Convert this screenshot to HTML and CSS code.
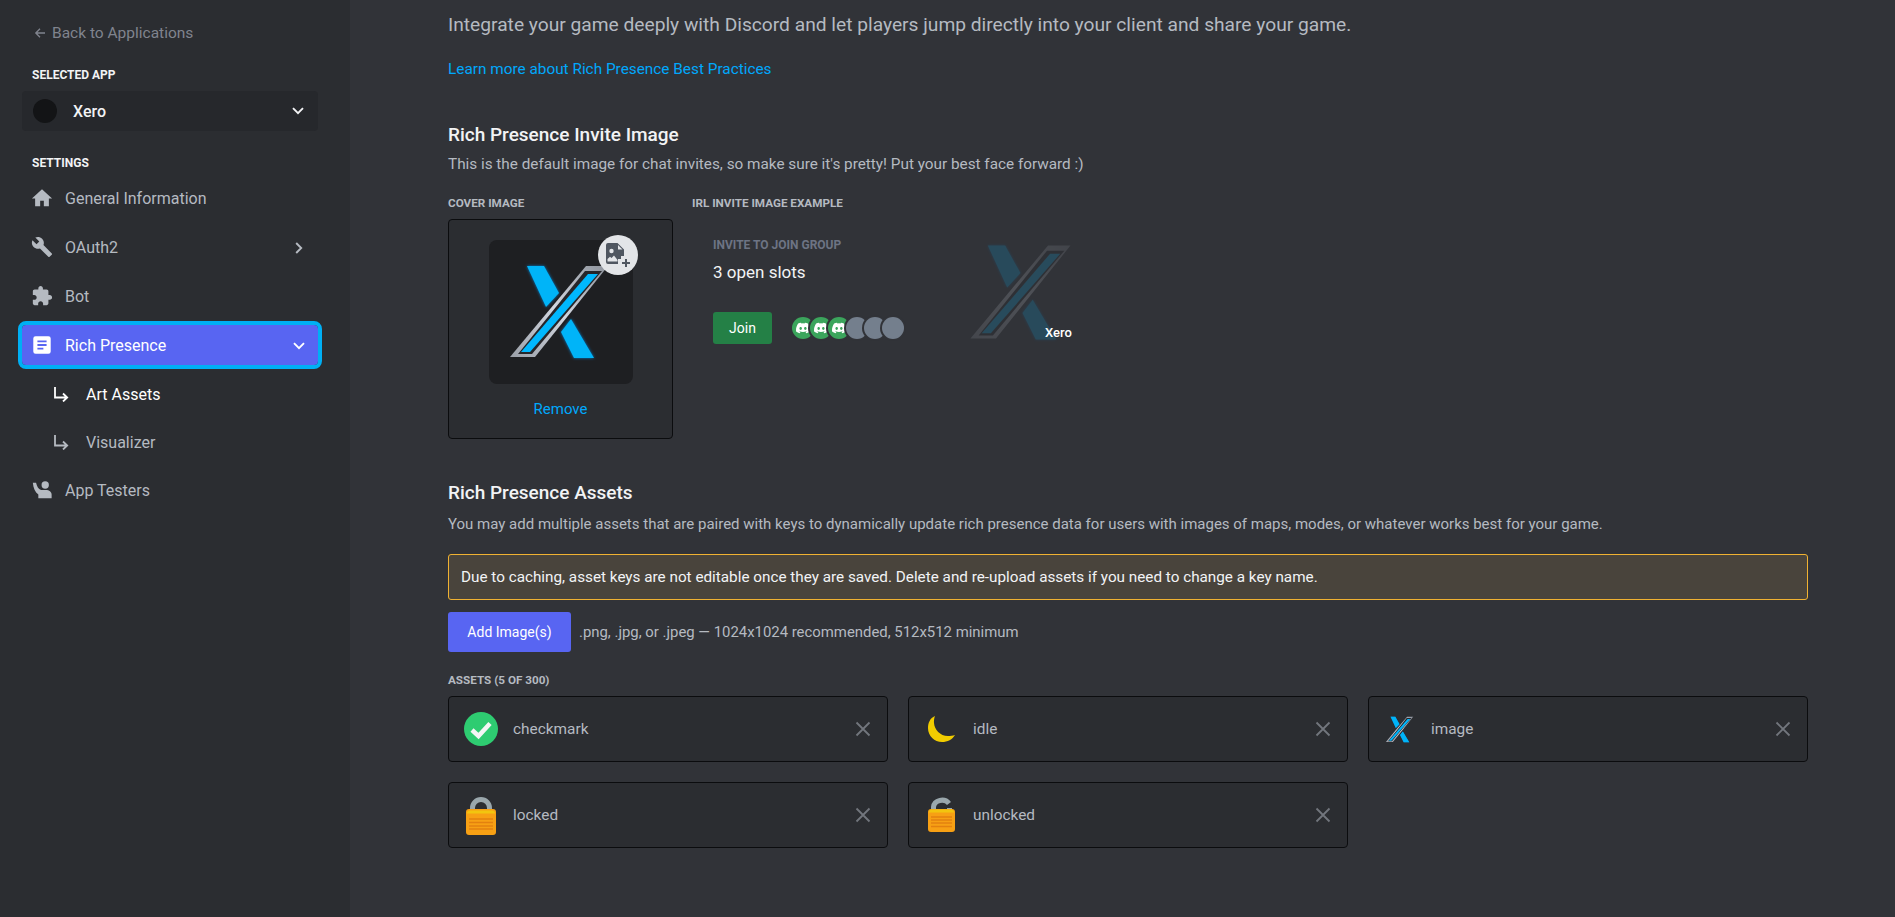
FILE: index.html
```html
<!DOCTYPE html>
<html lang="en">

<head>
    <meta charset="UTF-8">
    <meta name="viewport" content="width=device-width, initial-scale=1.0">
    <title>Rich Presence Art Assets</title>
    <link rel="stylesheet" href="styles.css">
</head>

<body>
    <svg class="defs" width="0" height="0" aria-hidden="true">
        <defs>
            <linearGradient id="steel" x1="0" y1="1" x2="1" y2="0">
                <stop offset="0" stop-color="#9a9fa8" />
                <stop offset="0.5" stop-color="#d2d7e0" />
                <stop offset="1" stop-color="#8d929b" />
            </linearGradient>
            <filter id="glow" x="-30%" y="-30%" width="160%" height="160%">
                <feGaussianBlur stdDeviation="1.8" />
            </filter>
            <filter id="soft" x="-5%" y="-5%" width="110%" height="110%">
                <feGaussianBlur stdDeviation="0.5" />
            </filter>
            <symbol id="xlogo" viewBox="0 0 144 144">
                <g fill="#0a7fd0" filter="url(#glow)">
                    <polygon points="38,26 55,26 70,53 57,67" />
                    <polygon points="82,79 105,118 85,118 72,92" />
                </g>
                <polygon fill="#00b4f8" points="38,26 55,26 70,53 57,67" />
                <polygon fill="#00b4f8" points="82,79 105,118 85,118 72,92" />
                <g filter="url(#soft)">
                    <polygon fill="url(#steel)" points="97,26 119,26 46,117 21,117" />
                    <polygon fill="#25262b" points="96,31 113,31 43,114 29,114" />
                    <polygon fill="#00b8ff" points="99,34 109,34 41,112 32,112" />
                </g>
            </symbol>
            <symbol id="subarrow" viewBox="0 0 16 16">
                <path d="M2 1v10.500h12M10 7.500l4.200 4-4.200 4" fill="none" stroke="currentColor" stroke-width="1.800" />
            </symbol>
            <symbol id="closex" viewBox="0 0 16 16">
                <path d="M1.500 1.500l13 13M14.500 1.500l-13 13" fill="none" stroke="currentColor" stroke-width="1.800" />
            </symbol>
            <symbol id="clyde" viewBox="0 0 24 24">
                <path fill="currentColor" d="M20.317 4.37a19.79 19.79 0 0 0-4.885-1.515.074.074 0 0 0-.079.037c-.211.375-.445.865-.608 1.25a18.27 18.27 0 0 0-5.487 0 12.64 12.64 0 0 0-.618-1.25.077.077 0 0 0-.079-.037A19.74 19.74 0 0 0 3.677 4.37a.07.07 0 0 0-.032.028C.533 9.046-.319 13.58.099 18.058a.082.082 0 0 0 .031.056 19.9 19.9 0 0 0 5.993 3.03.078.078 0 0 0 .084-.028c.462-.63.873-1.295 1.226-1.994a.076.076 0 0 0-.042-.106 13.1 13.1 0 0 1-1.872-.892.077.077 0 0 1-.008-.128c.126-.094.252-.192.372-.291a.074.074 0 0 1 .078-.011c3.928 1.794 8.18 1.794 12.061 0a.074.074 0 0 1 .079.01c.12.099.246.198.373.292a.077.077 0 0 1-.007.128c-.598.35-1.22.645-1.873.891a.077.077 0 0 0-.041.107c.36.698.772 1.363 1.225 1.993a.076.076 0 0 0 .084.029 19.84 19.84 0 0 0 6.002-3.03.077.077 0 0 0 .032-.055c.5-5.177-.838-9.674-3.549-13.66a.061.061 0 0 0-.031-.029zM8.02 15.33c-1.183 0-2.157-1.085-2.157-2.419 0-1.333.956-2.419 2.157-2.419 1.21 0 2.176 1.096 2.157 2.42 0 1.333-.956 2.418-2.157 2.418zm7.975 0c-1.183 0-2.157-1.085-2.157-2.419 0-1.333.955-2.419 2.157-2.419 1.21 0 2.176 1.096 2.157 2.42 0 1.333-.946 2.418-2.157 2.418z" />
            </symbol>
        </defs>
    </svg>

    <aside class="sidebar">
        <a class="back-link" href="#">
            <svg class="back-arrow" viewBox="0 0 12 12">
                <path d="M11 6H2M6 1.800L1.800 6 6 10.200" fill="none" stroke="currentColor" stroke-width="1.300" />
            </svg>
            Back to Applications
        </a>

        <div class="side-label selected-label">SELECTED APP</div>
        <div class="app-select">
            <span class="app-avatar"></span>
            <span class="app-name">Xero</span>
            <svg class="chevron" viewBox="0 0 12 8">
                <path d="M1 1.200l5 5 5-5" fill="none" stroke="currentColor" stroke-width="1.900" />
            </svg>
        </div>

        <div class="side-label settings-label">SETTINGS</div>
        <nav class="side-nav">
            <a class="nav-item" href="#">
                <svg class="nav-icon" viewBox="0 0 24 24">
                    <path fill="currentColor" d="M10 21v-6h4v6h5.500v-8.500H23L12 2.500 1 12.500h3.500V21z" />
                </svg>
                General Information
            </a>
            <a class="nav-item" href="#">
                <svg class="nav-icon" viewBox="0 0 24 24">
                    <path fill="currentColor" d="M22.7 19l-9.1-9.1c.9-2.3.4-5-1.5-6.9-2-2-5-2.4-7.4-1.3L9 6 6 9 1.6 4.7C.4 7.1.9 10.1 2.9 12.1c1.9 1.9 4.6 2.4 6.9 1.5l9.1 9.1c.4.4 1 .4 1.4 0l2.3-2.3c.5-.4.5-1.1.1-1.4z" />
                </svg>
                OAuth2
                <svg class="chevron chevron-right" viewBox="0 0 8 12">
                    <path d="M1.200 1l5 5-5 5" fill="none" stroke="currentColor" stroke-width="1.900" />
                </svg>
            </a>
            <a class="nav-item" href="#">
                <svg class="nav-icon" viewBox="0 0 24 24">
                    <path fill="currentColor" d="M20.5 11H19V7c0-1.1-.9-2-2-2h-4V3.5C13 2.12 11.88 1 10.5 1S8 2.12 8 3.5V5H4c-1.1 0-1.99.9-1.99 2v3.8H3.5c1.49 0 2.7 1.21 2.7 2.7s-1.21 2.7-2.7 2.7H2V20c0 1.1.9 2 2 2h3.8v-1.5c0-1.49 1.21-2.7 2.7-2.7 1.49 0 2.7 1.21 2.7 2.7V22H17c1.1 0 2-.9 2-2v-4h1.5c1.38 0 2.5-1.12 2.5-2.5S21.88 11 20.5 11z" />
                </svg>
                Bot
            </a>
            <a class="nav-item nav-active" href="#">
                <svg class="nav-icon" viewBox="0 0 24 24">
                    <path fill="currentColor" fill-rule="evenodd" d="M5 2.500h14A2.500 2.500 0 0 1 21.500 5v14a2.500 2.500 0 0 1-2.500 2.500H5A2.500 2.500 0 0 1 2.500 19V5A2.500 2.500 0 0 1 5 2.500zM7 7v2h10V7zm0 4v2h10v-2zm0 4v2h6.500v-2z" />
                </svg>
                Rich Presence
                <svg class="chevron" viewBox="0 0 12 8">
                    <path d="M1 1.200l5 5 5-5" fill="none" stroke="currentColor" stroke-width="1.900" />
                </svg>
            </a>
            <a class="nav-sub nav-sub-active" href="#">
                <svg class="sub-icon"><use href="#subarrow" /></svg>
                Art Assets
            </a>
            <a class="nav-sub" href="#">
                <svg class="sub-icon"><use href="#subarrow" /></svg>
                Visualizer
            </a>
            <a class="nav-item" href="#">
                <svg class="nav-icon" viewBox="0 0 24 24">
                    <path fill="currentColor" d="M2 4h3.500c1 4 2.500 7 5.500 8h5c4 0 6.500 2 6.500 5v4H8v-4C4.500 14 2.500 10 2 4z" />
                    <circle fill="currentColor" cx="15.500" cy="6.500" r="4" />
                </svg>
                App Testers
            </a>
        </nav>
    </aside>

    <main class="content">
        <p class="intro">Integrate your game deeply with Discord and let players jump directly into your client and share your game.</p>
        <a class="learn-link" href="#">Learn more about Rich Presence Best Practices</a>

        <h2 class="section-title invite-title">Rich Presence Invite Image</h2>
        <p class="section-desc">This is the default image for chat invites, so make sure it's pretty! Put your best face forward :)</p>

        <div class="invite-row">
            <div class="cover-col">
                <div class="field-label">COVER IMAGE</div>
                <div class="cover-box">
                    <div class="cover-image">
                        <svg class="cover-logo"><use href="#xlogo" /></svg>
                        <span class="cover-badge">
                            <svg viewBox="0 0 24 24">
                                <path fill="#4f5660" fill-rule="evenodd" d="M2 0h9.500L18 6.500V13h-3v3h-3v5H2a2 2 0 0 1-2-2V2a2 2 0 0 1 2-2zm10 2v4.500h4.500zM5.500 5.800a2.200 2.200 0 1 0 0 4.400 2.200 2.200 0 0 0 0-4.400zM1.500 18.500h10V17L8 12.500 5.500 15 4 13.800 1.500 16z" />
                                <path fill="#4f5660" d="M19 16h2v3h3v2h-3v3h-2v-3h-3v-2h3z" />
                            </svg>
                        </span>
                    </div>
                    <a class="remove-link" href="#">Remove</a>
                </div>
            </div>

            <div class="example-col">
                <div class="field-label">IRL INVITE IMAGE EXAMPLE</div>
                <div class="invite-preview">
                    <div class="invite-info">
                        <div class="invite-kicker">INVITE TO JOIN GROUP</div>
                        <div class="invite-slots">3 open slots</div>
                        <div class="invite-actions">
                            <button class="join-btn">Join</button>
                            <div class="avatars">
                                <span class="avatar avatar-on"><svg><use href="#clyde" /></svg></span>
                                <span class="avatar avatar-on"><svg><use href="#clyde" /></svg></span>
                                <span class="avatar avatar-on"><svg><use href="#clyde" /></svg></span>
                                <span class="avatar"></span>
                                <span class="avatar"></span>
                                <span class="avatar"></span>
                            </div>
                        </div>
                    </div>
                    <div class="invite-art">
                        <svg class="invite-logo"><use href="#xlogo" /></svg>
                        <span class="invite-app">Xero</span>
                    </div>
                </div>
            </div>
        </div>

        <h2 class="section-title assets-title">Rich Presence Assets</h2>
        <p class="section-desc assets-desc">You may add multiple assets that are paired with keys to dynamically update rich presence data for users with images of maps, modes, or whatever works best for your game.</p>

        <div class="warning">Due to caching, asset keys are not editable once they are saved. Delete and re-upload assets if you need to change a key name.</div>

        <div class="upload-row">
            <button class="add-btn">Add Image(s)</button>
            <span class="upload-hint">.png, .jpg, or .jpeg — 1024x1024 recommended, 512x512 minimum</span>
        </div>

        <div class="field-label assets-count">ASSETS (5 OF 300)</div>
        <div class="asset-grid">
            <div class="asset">
                <svg class="thumb" viewBox="0 0 36 36">
                    <circle cx="18" cy="18" r="17" fill="#2ecc71" />
                    <path d="M9 19l6.500 6L27 12.500" fill="none" stroke="#f4f6f5" stroke-width="4.500" />
                </svg>
                <span class="asset-key">checkmark</span>
                <svg class="asset-close"><use href="#closex" /></svg>
            </div>
            <div class="asset">
                <svg class="thumb" viewBox="0 0 36 36">
                    <path fill="#f1cc00" d="M12 5C7 7 5 12 5 17c0 8 6.500 14 14 14 5.500 0 10.500-2.500 13-7-2 .8-5 1-7 1-8 0-13.500-6.500-14-13-.2-2.500.2-5 1-7z" />
                </svg>
                <span class="asset-key">idle</span>
                <svg class="asset-close"><use href="#closex" /></svg>
            </div>
            <div class="asset">
                <svg class="thumb thumb-logo" viewBox="18 24 104 96"><use href="#xlogo" width="144" height="144" /></svg>
                <span class="asset-key">image</span>
                <svg class="asset-close"><use href="#closex" /></svg>
            </div>
            <div class="asset">
                <svg class="thumb thumb-tall" viewBox="0 0 36 40">
                    <path d="M9.500 16V13a8.500 8.500 0 0 1 17 0v3" fill="none" stroke="#9aa7ac" stroke-width="5" />
                    <rect x="3" y="14" width="30" height="26" rx="3" fill="#f7a014" />
                    <path d="M4 18.500a3 3 0 0 1 3-3h22a3 3 0 0 1 3 3z" fill="#f2c50f" />
                    <path d="M6 24h24M6 27.500h24M6 31h24M6 34h24" stroke="#e3810f" stroke-width="1.300" />
                </svg>
                <span class="asset-key">locked</span>
                <svg class="asset-close"><use href="#closex" /></svg>
            </div>
            <div class="asset">
                <svg class="thumb thumb-tall" viewBox="0 0 36 40">
                    <path d="M10.500 15V12a8.500 7.500 0 0 1 15.500-3.500M26.500 13v2" fill="none" stroke="#9aa7ac" stroke-width="5" />
                    <rect x="5" y="14" width="27" height="23" rx="3" fill="#f7a014" />
                    <path d="M6 17.500a3 3 0 0 1 3-3h19a3 3 0 0 1 3 3z" fill="#f2c50f" />
                    <path d="M8 22h21M8 25h21M8 28h21M8 31.500h21" stroke="#e3810f" stroke-width="1.300" />
                </svg>
                <span class="asset-key">unlocked</span>
                <svg class="asset-close"><use href="#closex" /></svg>
            </div>
        </div>
    </main>
</body>

</html>
```

FILE: styles.css
```css
* {
    margin: 0;
    padding: 0;
    box-sizing: border-box;
}

body {
    display: flex;
    width: 1895px;
    height: 917px;
    overflow: hidden;
    background-color: #313338;
    color: #b5bac1;
    font-family: Roboto, "Noto Sans", sans-serif;
    font-size: 15px;
}

a {
    text-decoration: none;
    color: inherit;
}

.defs {
    position: absolute;
}

/* sidebar */

.sidebar {
    flex: none;
    width: 350px;
    padding: 24px 32px 0 22px;
    background-color: #2b2d31;
}

.back-link {
    display: flex;
    align-items: center;
    gap: 6px;
    height: 18px;
    margin-left: 12px;
    color: #80848e;
    font-size: 15.5px;
}

.back-arrow {
    width: 12px;
    height: 12px;
}

.side-label {
    margin-left: 10px;
    height: 16px;
    line-height: 16px;
    color: #f2f3f5;
    font-size: 12px;
    font-weight: 700;
}

.selected-label {
    margin-top: 25px;
}

.settings-label {
    margin-top: 24px;
}

.app-select {
    display: flex;
    align-items: center;
    height: 40px;
    margin-top: 8px;
    padding: 0 11px;
    border-radius: 4px;
    background-color: #26282c;
    color: #f2f3f5;
}

.app-avatar {
    width: 24px;
    height: 24px;
    margin-right: 16px;
    border-radius: 50%;
    background-color: #131416;
}

.app-name {
    font-size: 16px;
    font-weight: 500;
}

.chevron {
    width: 12px;
    height: 8px;
    margin-left: auto;
    margin-right: 3px;
}

.chevron-right {
    width: 8px;
    height: 12px;
    margin-right: 5px;
}

.side-nav {
    display: flex;
    flex-direction: column;
    margin-top: 7px;
}

.nav-item {
    display: flex;
    align-items: center;
    height: 40px;
    margin-bottom: 9px;
    padding: 0 10px 0 9px;
    border-radius: 4px;
    font-size: 16px;
}

.nav-item .chevron {
    margin-top: 2px;
}

.nav-icon {
    flex: none;
    width: 22px;
    height: 22px;
    margin-right: 12px;
}

.nav-active {
    background-color: #5865f2;
    color: #fff;
    outline: 4px solid #00aff4;
}

.nav-sub {
    display: flex;
    align-items: center;
    height: 40px;
    margin-bottom: 8px;
    padding-left: 31px;
    font-size: 16px;
}

.nav-sub-active {
    color: #fff;
}

.sub-icon {
    width: 16px;
    height: 16px;
    margin-right: 17px;
}

/* main column */

.content {
    flex: 1;
    padding: 13px 87px 0 98px;
}

.intro {
    line-height: 24px;
    font-size: 19.2px;
}

.learn-link {
    display: block;
    margin-top: 23px;
    line-height: 18px;
    color: #00a8fc;
    font-size: 15.35px;
}

.section-title {
    height: 24px;
    line-height: 24px;
    color: #f2f3f5;
    font-size: 19px;
    font-weight: 500;
}

.invite-title {
    margin-top: 45px;
}

.assets-title {
    margin-top: 42px;
}

.section-desc {
    margin-top: 8px;
    line-height: 18px;
    font-size: 15.3px;
}

.assets-desc {
    margin-top: 10px;
    font-size: 15px;
}

.field-label {
    height: 16px;
    line-height: 16px;
    color: #b5bac1;
    font-size: 11.7px;
    font-weight: 700;
}

.invite-row {
    display: flex;
    gap: 19px;
    margin-top: 22px;
}

.cover-col {
    width: 225px;
}

.cover-box {
    display: flex;
    flex-direction: column;
    align-items: center;
    height: 220px;
    margin-top: 8px;
    padding-top: 20px;
    border: 1px solid #0b0c0e;
    border-radius: 4px;
    background-color: #2b2d31;
}

.cover-image {
    position: relative;
    width: 144px;
    height: 144px;
    border-radius: 8px;
    background-color: #1e1f22;
}

.cover-logo {
    display: block;
    width: 144px;
    height: 144px;
}

.cover-badge {
    position: absolute;
    top: -5px;
    right: -5px;
    display: flex;
    align-items: center;
    justify-content: center;
    width: 40px;
    height: 40px;
    border-radius: 50%;
    background-color: #e3e5e8;
}

.cover-badge svg {
    width: 24px;
    height: 24px;
}

.remove-link {
    margin-top: 15px;
    line-height: 20px;
    color: #00a8fc;
    font-size: 15px;
}

.invite-preview {
    display: flex;
    gap: 49px;
    padding: 26px 0 0 21px;
}

.invite-kicker {
    height: 16px;
    line-height: 16px;
    color: #6d7484;
    font-size: 12px;
    font-weight: 700;
}

.invite-slots {
    margin-top: 9px;
    line-height: 20px;
    color: #f2f3f5;
    font-size: 17px;
}

.invite-actions {
    display: flex;
    align-items: center;
    gap: 20px;
    margin-top: 30px;
}

.join-btn {
    width: 59px;
    height: 32px;
    border: 0;
    border-radius: 3px;
    background-color: #248046;
    color: #fff;
    font-family: inherit;
    font-size: 14px;
}

.avatars {
    display: flex;
}

.avatar {
    display: flex;
    align-items: center;
    justify-content: center;
    width: 22px;
    height: 22px;
    margin-right: -4px;
    border-radius: 50%;
    background-color: #747f8d;
    box-shadow: 0 0 0 2px #313338;
    color: #fff;
}

.avatar-on {
    background-color: #3ba55c;
}

.avatar svg {
    width: 14px;
    height: 14px;
}

.invite-art {
    position: relative;
    width: 147px;
    height: 147px;
    margin-top: -18px;
}

.invite-logo {
    display: block;
    width: 147px;
    height: 147px;
    opacity: 0.18;
}

.invite-app {
    position: absolute;
    left: 96px;
    top: 106px;
    color: #fff;
    font-size: 13px;
    font-weight: 500;
}

.warning {
    height: 46px;
    margin-top: 21px;
    padding-left: 12px;
    line-height: 44px;
    border: 1px solid #f0b232;
    border-radius: 3px;
    background-color: #49443c;
    color: #f2f3f5;
    font-size: 15.28px;
}

.upload-row {
    display: flex;
    align-items: center;
    gap: 8px;
    margin-top: 12px;
}

.upload-hint {
    font-size: 14.9px;
}

.add-btn {
    width: 123px;
    height: 40px;
    border: 0;
    border-radius: 3px;
    background-color: #5865f2;
    color: #fff;
    font-family: inherit;
    font-size: 14px;
}

.assets-count {
    margin-top: 20px;
}

.asset-grid {
    display: grid;
    grid-template-columns: repeat(3, 440px);
    grid-auto-rows: 66px;
    gap: 20px;
    margin-top: 8px;
}

.asset {
    display: flex;
    align-items: center;
    padding: 0 16px 0 14px;
    border: 1px solid #0b0c0e;
    border-radius: 4px;
    background-color: #2b2d31;
}

.thumb {
    flex: none;
    width: 36px;
    height: 36px;
    margin-right: 14px;
}

.thumb-tall {
    height: 40px;
}

.thumb-logo {
    width: 29px;
    height: 27px;
    margin: 0 17px 0 2px;
}

.asset-key {
    font-size: 15.4px;
}

.asset-close {
    width: 16px;
    height: 16px;
    margin-left: auto;
    color: #72767d;
}
```
